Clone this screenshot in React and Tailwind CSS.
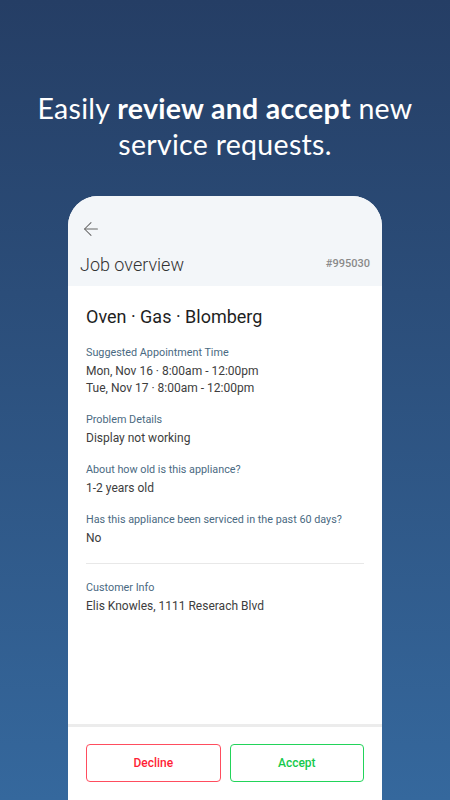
import { ArrowLeft } from "lucide-react";

const Field = ({ label, children }) => (
    <div>
        <p className="text-[10.8px] leading-[16px] text-[#4a6a82]">{label}</p>
        <div className="mt-[2px] text-[12px] leading-[17px] text-[#3d3d3d]">{children}</div>
    </div>
);

const App = () => {
    return (
        <div className="h-[800px] w-[450px] overflow-hidden bg-gradient-to-b from-[#253e65] to-[#35689d] font-['Roboto',sans-serif]">
            {/* Headline */}
            <h1 className="pt-[90px] text-center font-['Lato',sans-serif] text-[28.5px] leading-[36px] tracking-[0.3px] text-white font-normal">
                Easily <span className="font-bold">review and accept</span> new
                <br />
                service requests.
            </h1>

            {/* Phone */}
            <div className="ml-[68px] mt-[34px] flex h-[604px] w-[314px] flex-col overflow-hidden rounded-t-[30px] bg-white">
                <div className="h-[90px] bg-[#f3f6f9] px-3 pt-[22px]">
                    <ArrowLeft size={22} strokeWidth={1.1} className="text-[#666]" />
                    <div className="mt-[11px] flex items-center justify-between">
                        <span className="text-[18px] font-light text-[#333]">Job overview</span>
                        <span className="text-[11px] font-medium text-[#8a8a8a]">#995030</span>
                    </div>
                </div>

                <div className="flex-1 px-[18px] pt-[19px]">
                    <h2 className="text-[18px] leading-[24px] text-[#1f1f1f]">Oven · Gas · Blomberg</h2>
                    <div className="mt-[16px] flex flex-col gap-[15px]">
                        <Field label="Suggested Appointment Time">
                            <p>Mon, Nov 16 · 8:00am - 12:00pm</p>
                            <p>Tue, Nov 17 · 8:00am - 12:00pm</p>
                        </Field>
                        <Field label="Problem Details">Display not working</Field>
                        <Field label="About how old is this appliance?">1-2 years old</Field>
                        <Field label="Has this appliance been serviced in the past 60 days?">No</Field>
                    </div>
                    <div className="mt-[16px] border-t border-[#e8e8e8] pt-[16px]">
                        <Field label="Customer Info">Elis Knowles, 1111 Reserach Blvd</Field>
                    </div>
                </div>

                <div className="flex h-[76px] gap-[9px] border-t-[3px] border-[#ececec] px-[18px] pt-[17px]">
                    <button className="h-[38px] flex-1 rounded-[4px] border border-[#ff4d5e] text-[12px] font-medium text-[#ff1e36]">
                        Decline
                    </button>
                    <button className="h-[38px] flex-1 rounded-[4px] border border-[#22d45a] text-[12px] font-medium text-[#16c94c]">
                        Accept
                    </button>
                </div>
            </div>
        </div>
    );
};

export default App;
